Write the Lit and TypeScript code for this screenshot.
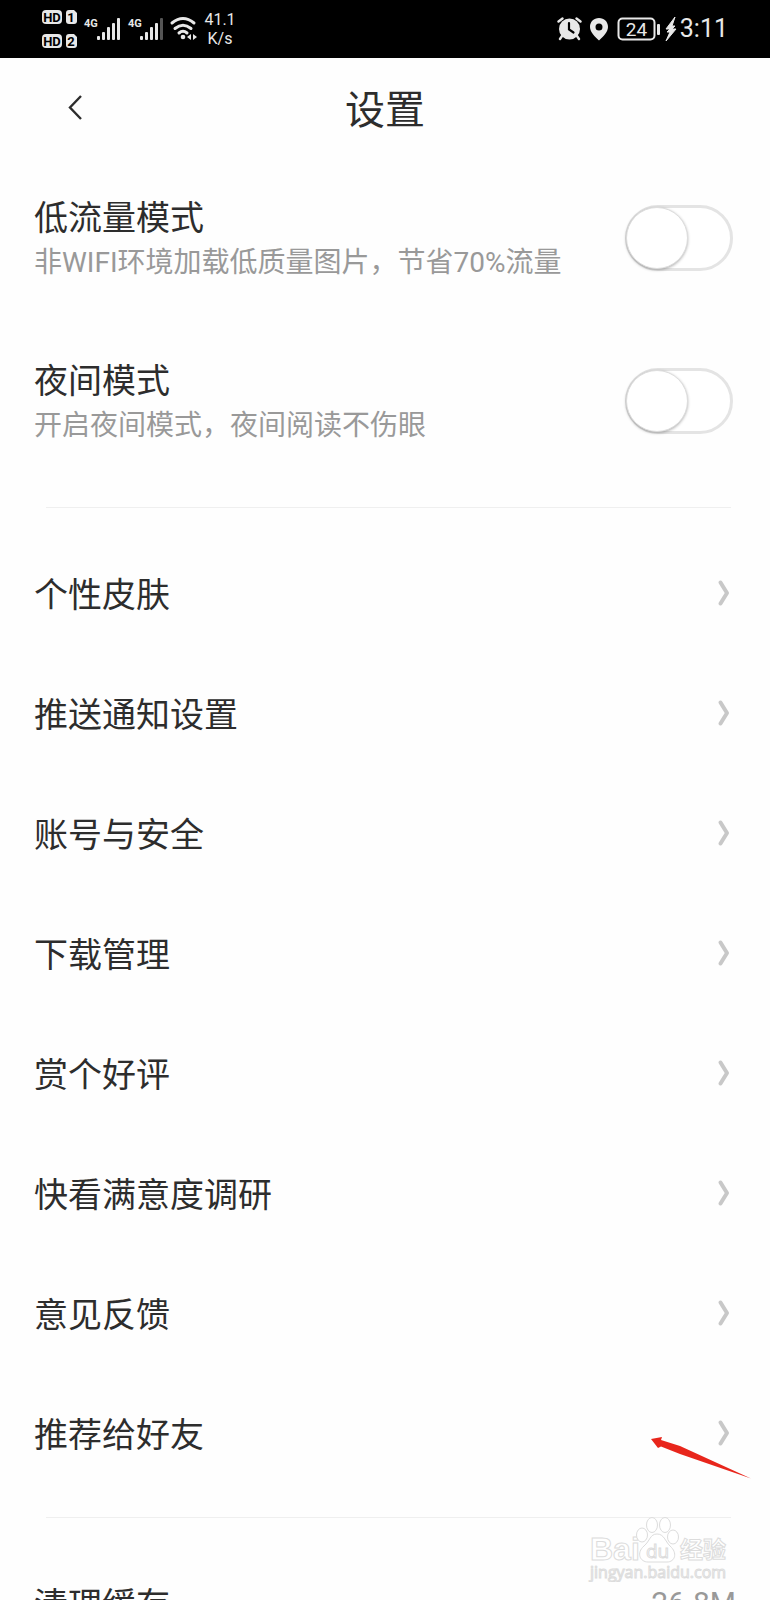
import { LitElement, html, svg, css } from "lit";
import { customElement, state } from "lit/decorators.js";

interface Toggle { id: string; title: string; note: string; on: boolean; }

@customElement("app-root")
export class AppRoot extends LitElement {
  @state() private toggles: Toggle[] = [
    { id: "data", title: "低流量模式", note: "非WIFI环境加载低质量图片，节省70%流量", on: false },
    { id: "night", title: "夜间模式", note: "开启夜间模式，夜间阅读不伤眼", on: false },
  ];

  private links = ["个性皮肤", "推送通知设置", "账号与安全", "下载管理", "赏个好评", "快看满意度调研", "意见反馈", "推荐给好友"];

  static styles = css`
    :host { display: block; position: relative; height: 100vh; overflow: hidden; background: #fefefe; color: #2d2d2d;
      font-family: "Noto Sans CJK SC", sans-serif; }
    *, *::before { box-sizing: border-box; }
    .status { display: flex; justify-content: space-between; height: 58px; padding: 0 42px; background: #000; color: #e8e8e8;
      font-family: Roboto, sans-serif; }
    .group { display: flex; align-items: center; }
    .status svg { display: block; }
    .speed { margin-left: 4px; width: 36px; text-align: center; font-size: 16px; line-height: 19px; }
    .clock { font-size: 25px; line-height: 32px; }
    .bar { display: grid; grid-template-columns: 1fr auto 1fr; align-items: center; height: 98px; padding: 0 60px; }
    .back { width: 32px; height: 40px; padding: 0; border: 0; background: none; }
    .back svg { display: block; }
    h1 { margin: 0; font-size: 40px; line-height: 56px; font-weight: 400; }
    .list { margin: 0; padding: 0; list-style: none; }
    .switch { display: flex; justify-content: space-between; align-items: center; height: 163px; padding: 0 37px 0 34px; }
    .switch label { padding-top: 4px; }
    .title { display: block; font-size: 34px; line-height: 46px; }
    .note { display: block; font-family: Roboto, "Noto Sans CJK SC", sans-serif; font-size: 28px; line-height: 48px; color: #999; }
    .track { appearance: none; display: block; flex: none; width: 108px; height: 66px; margin: 0; border: 3px solid #e4e4e4; border-radius: 33px; background: #fff; }
    .track::before { content: ""; display: block; width: 62px; height: 62px; margin: -1px -2px; border-radius: 50%; background: #fff;
      border: 1px solid #ddd; box-shadow: 0 1px 3px rgba(0,0,0,.3); }
    .track:checked { background: #ffe14d; }
    .track:checked::before { margin-left: 42px; }
    .line { height: 1px; margin: 0 39px 0 46px; border: 0; background: #efefef; }
    .modes { padding-bottom: 25px; }
    .modes + .line { margin-bottom: 24px; }
    .links + .line { margin-top: 25px; margin-bottom: 24px; }
    .row { display: flex; justify-content: space-between; align-items: center; height: 120px; padding: 2px 39px 0 34px;
      font-size: 34px; line-height: 46px; color: inherit; text-decoration: none; }
    .row svg { display: block; }
    .row.stat { padding-right: 34px; }
    .value { font-size: 30px; color: #999; font-family: Roboto, sans-serif; }
    .arrow { position: absolute; left: 650px; top: 1436px; }
    .mark { position: absolute; left: 586px; top: 1514px; }
  `;

  private flip(i: number) {
    this.toggles = this.toggles.map((t, n) => (n === i ? { ...t, on: !t.on } : t));
  }

  private signal(weak: boolean) {
    return svg`<g fill="#e8e8e8"><rect x="0" y="18" width="3" height="4" rx="1"/><rect x="5" y="14" width="3" height="8" rx="1"/>
      <rect x="10" y="9" width="3" height="13" rx="1"/><rect x="15" y="5" width="3" height="17" rx="1"/>
      <rect x="20" y="0" width="3" height="22" rx="1" fill=${weak ? "#555" : "#e8e8e8"}/></g>`;
  }

  private leftIcons() {
    return html`<svg width="156" height="58" viewBox="0 0 156 58" aria-hidden="true" font-family="Roboto" font-weight="700">
      ${[10, 34].map((y, i) => svg`<rect x="0" y=${y} width="20" height="14" rx="4" fill="#e8e8e8"/>
        <text x="10" y=${y + 12} font-size="13" text-anchor="middle" fill="#000">HD</text>
        <path transform="translate(24 ${y})" d="M3 0h5l3 3v8q0 3-3 3H3q-3 0-3-3V3q0-3 3-3z" fill="#e8e8e8"/>
        <text x="29" y=${y + 12} font-size="13" text-anchor="middle" fill="#000">${i + 1}</text>`)}
      <text x="42" y="27" font-size="11" fill="#e8e8e8">4G</text><g transform="translate(55 18)">${this.signal(false)}</g>
      <text x="86" y="27" font-size="11" fill="#e8e8e8">4G</text><g transform="translate(98 18)">${this.signal(true)}</g>
      <g fill="none" stroke="#e8e8e8" stroke-width="3" stroke-linecap="round">
        <path d="M130 23q11-9 22 0M133 28.500q8-6.500 16 0M137 33q4-3.500 8 0"/></g>
      <circle cx="141" cy="37" r="2.300" fill="#e8e8e8"/><path d="M149 34v6l-4-3zM151 34v6l4-3z" fill="#e8e8e8"/>
    </svg>`;
  }

  private rightIcons() {
    return html`<svg width="123" height="58" viewBox="0 0 123 58" aria-hidden="true">
      <g fill="none" stroke="#e8e8e8" stroke-width="2.400" stroke-linecap="round">
        <path d="M1.500 21.500l4-3M19.500 18.500l4 3M5 36l-2 3M20 36l2 3"/></g>
      <circle cx="12.500" cy="29" r="10.500" fill="#e8e8e8"/><path d="M12 23v6.500l4.500 3" fill="none" stroke="#000" stroke-width="2.200" stroke-linecap="round"/>
      <path fill-rule="evenodd" d="M42 18c5.200 0 9 3.800 9 9 0 5-5 10-9 13.500C38 37 33 32 33 27c0-5.200 3.800-9 9-9zm0 5.500a3.500 3.500 0 1 0 0 7 3.500 3.500 0 0 0 0-7z" fill="#e8e8e8"/>
      <rect x="61.500" y="18.500" width="36" height="21" rx="4" fill="none" stroke="#e8e8e8" stroke-width="2"/>
      <text x="79.500" y="36" font-family="Roboto" font-size="19" text-anchor="middle" fill="#e8e8e8">24</text>
      <rect x="100" y="24" width="3" height="11" rx="1" fill="#e8e8e8"/>
      <path d="M118 17l-9 12h4l-3 3h3l-4 9 10-12h-4l3-3h-3z" fill="#e8e8e8" stroke="#e8e8e8"/>
    </svg>`;
  }

  private chevron() {
    return html`<svg width="14" height="28" viewBox="0 0 14 28" aria-hidden="true"><path d="M3.500 3.500l6.500 10.500L3.500 24.500" fill="none" stroke="#c8c8c8" stroke-width="4" stroke-linecap="round" stroke-linejoin="round"/></svg>`;
  }

  render() {
    return html`
      <div class="status">
        <div class="group">${this.leftIcons()}<span class="speed">41.1<br>K/s</span></div>
        <div class="group">${this.rightIcons()}<span class="clock">3:11</span></div>
      </div>
      <header class="bar">
        <button class="back" aria-label="返回"><svg width="32" height="40" viewBox="0 0 32 40"><path d="M21 9L10 20.500 21 32" fill="none" stroke="#2d2d2d" stroke-width="2.400"/></svg></button>
        <h1>设置</h1>
      </header>
      <div class="modes">
        ${this.toggles.map((t, i) => html`<div class="switch">
          <label for=${t.id}><span class="title">${t.title}</span><span class="note">${t.note}</span></label>
          <input class="track" type="checkbox" role="switch" id=${t.id} .checked=${t.on} @change=${() => this.flip(i)}>
        </div>`)}
      </div>
      <hr class="line">
      <ul class="list links">${this.links.map((l) => html`<li><a class="row" href="#">${l}${this.chevron()}</a></li>`)}</ul>
      <hr class="line">
      <ul class="list"><li><a class="row stat" href="#">清理缓存<span class="value">26.8M</span></a></li></ul>
      <svg class="arrow" width="104" height="44" viewBox="0 0 104 44" aria-hidden="true"><path d="M1 3L12 1l-1 3 19 6 71 32.500L30 18 11 10.500 8 12z" fill="#e8261c"/></svg>
      <svg class="mark" width="150" height="68" viewBox="0 0 150 68" fill="#fff" stroke="#dcdcdc" stroke-width="1" font-family="Open Sans" aria-hidden="true">
        <text x="4" y="46" font-size="32" font-weight="700" font-family="Liberation Sans">Bai</text>
        <g><ellipse cx="56" cy="21" rx="5.500" ry="7"/><ellipse cx="66" cy="11" rx="5.500" ry="7.500"/><ellipse cx="79" cy="11" rx="5.500" ry="7.500"/><ellipse cx="87" cy="23" rx="5.500" ry="7"/>
        <path d="M71 20c7 0 8 7 13 12 8 7 5 16-3 16H62c-8 0-12-9-4-16 6-5 6-12 13-12z"/></g>
        <text x="60" y="44" font-size="19">du</text>
        <text x="94" y="44" font-size="23" font-weight="700" font-family="Noto Sans CJK SC">经验</text>
        <text x="4" y="64" font-size="16">jingyan.baidu.com</text>
      </svg>`;
  }
}
